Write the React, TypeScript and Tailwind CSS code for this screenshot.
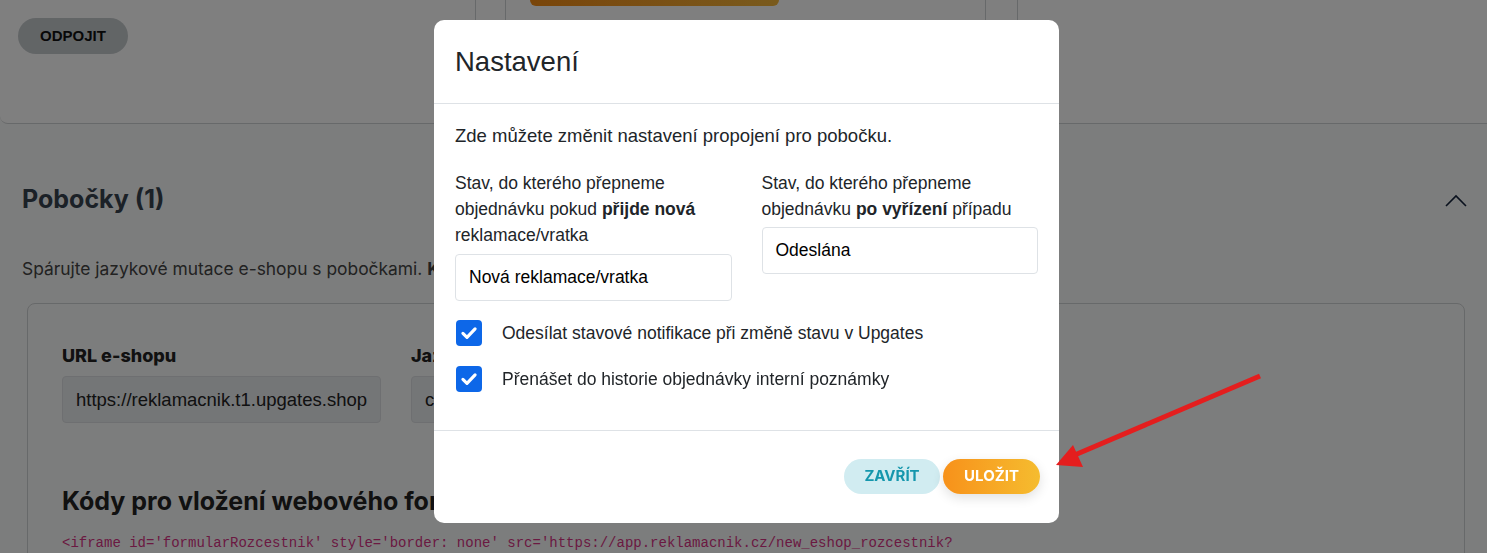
import React from 'react';

const Check = () => (
  <svg viewBox="0 0 16 16" className="w-[18px] h-[18px]" fill="none">
    <path d="M2.6 8.4l3.6 3.5L13.4 4.4" stroke="white" strokeWidth="2.8" strokeLinecap="round" strokeLinejoin="round" />
  </svg>
);

const Checkbox: React.FC<{ label: string }> = ({ label }) => (
  <label className="flex items-center gap-[20px]">
    <span className="w-[26px] h-[26px] rounded-[4px] bg-[#0d67e8] flex items-center justify-center ml-[1px]">
      <Check />
    </span>
    <span>{label}</span>
  </label>
);

const App: React.FC = () => {
  return (
    <div className="relative h-[553px] overflow-hidden bg-[#f9fbfa] font-['Inter',sans-serif] text-[#333]">
      {/* Page behind the modal */}
      <div className="flex h-[124px] bg-white border-b border-[#cfd2d4] rounded-bl-lg">
        <div className="w-[476px] border-r border-[#cfd2d4] pt-[18px] pl-[18px]">
          <button className="h-[36px] w-[110px] rounded-full bg-[#c5cacd] font-['Liberation_Sans',sans-serif] font-bold text-[15px] text-[#111]">
            ODPOJIT
          </button>
        </div>
        <div className="w-[29px]" />
        <div className="w-[481px] border-l border-r border-[#cfd2d4] pl-[24px]">
          <div className="w-[249px] h-[6px] rounded-b-[7px] bg-gradient-to-r from-[#f38a12] to-[#f3b53a]" />
        </div>
        <div className="w-[31px]" />
        <div className="flex-1 border-l border-[#cfd2d4]" />
      </div>

      <div className="pl-[22px] pr-[20px]">
        <div className="flex items-center justify-between mt-[60px] h-[32px]">
          <h2 className="text-[25px] font-bold text-[#36424f]">Pobočky (1)</h2>
          <svg viewBox="0 0 22 13" className="w-[22px] h-[13px]" fill="none">
            <path d="M1 12L11 2l10 10" stroke="#14233c" strokeWidth="1.6" />
          </svg>
        </div>
        <p className="mt-[41px] text-[17.4px] leading-[24px] text-[#444]">
          Spárujte jazykové mutace e-shopu s pobočkami. <b>Každá</b> pobočka má vlastní nastavení.
        </p>
      </div>

      <div className="ml-[27px] mr-[22px] mt-[22px] h-[300px] rounded-lg border border-[#cfd2d4] pl-[34px] pt-[41px]">
        <div className="flex gap-[30px]">
          <div className="w-[319px]">
            <div className="text-[18px] font-extrabold text-[#222] leading-[22px]">URL e-shopu</div>
            <div className="mt-[9px] h-[47px] rounded-[4px] bg-[#e9ecef] border border-[#dcdfe2] flex items-center px-[13px] font-['Liberation_Sans',sans-serif] text-[18.5px] text-[#222] whitespace-nowrap overflow-hidden">
              https://reklamacnik.t1.upgates.shop
            </div>
          </div>
          <div className="w-[320px]">
            <div className="text-[18px] font-extrabold text-[#222] leading-[22px]">Jazyk</div>
            <div className="mt-[9px] h-[47px] rounded-[4px] bg-[#e9ecef] border border-[#dcdfe2] flex items-center px-[13px] font-['Liberation_Sans',sans-serif] text-[18.5px] text-[#222]">
              cs
            </div>
          </div>
        </div>
        <h3 className="mt-[62px] text-[25px] font-bold text-[#222] leading-[32px]">Kódy pro vložení webového formuláře</h3>
        <div className="mt-[16px] font-['Liberation_Mono',monospace] text-[14px] text-[#d63384] whitespace-nowrap">
          &lt;iframe id='formularRozcestnik' style='border: none' src='https://app.reklamacnik.cz/new_eshop_rozcestnik?
        </div>
      </div>

      {/* Overlay + modal */}
      <div className="fixed inset-0 bg-black/50">
        <div className="ml-[434px] mt-[20px] w-[625px] rounded-[10px] bg-white font-['Liberation_Sans',sans-serif] text-[#212529] text-[17.5px]">
          <div className="h-[84px] border-b border-[#dee2e6] px-[21px] flex items-center">
            <h5 className="text-[27.5px] leading-none">Nastavení</h5>
          </div>
          <div className="px-[21px] pt-[19px] pb-[37px]">
            <p className="leading-[26px] text-[18.5px]">Zde můžete změnit nastavení propojení pro pobočku.</p>
            <div className="mt-[21px] grid grid-cols-2 gap-[30px]">
              <div>
                <div className="leading-[26px]">
                  Stav, do kterého přepneme objednávku pokud <b>přijde nová</b> reklamace/vratka
                </div>
                <div className="mt-[6px] h-[47px] border border-[#dee2e6] rounded-[4px] flex items-center px-[13px] text-black">
                  Nová reklamace/vratka
                </div>
              </div>
              <div>
                <div className="leading-[26px]">
                  Stav, do kterého přepneme objednávku <b>po vyřízení</b> případu
                </div>
                <div className="mt-[5px] h-[47px] border border-[#dee2e6] rounded-[4px] flex items-center px-[13px] text-black">
                  Odeslána
                </div>
              </div>
            </div>
            <div className="mt-[19px] flex flex-col gap-[20px]">
              <Checkbox label="Odesílat stavové notifikace při změně stavu v Upgates" />
              <Checkbox label="Přenášet do historie objednávky interní poznámky" />
            </div>
          </div>
          <div className="h-[93px] border-t border-[#dee2e6] flex items-center justify-end gap-[3px] pr-[19px]">
            <button className="h-[35px] w-[96px] rounded-full bg-[#d1ecf1] text-[#1597ad] font-['Inter',sans-serif] font-bold text-[15px]">
              ZAVŘÍT
            </button>
            <button className="h-[35px] w-[97px] rounded-full bg-gradient-to-r from-[#f7911a] to-[#f5bc2f] text-white font-['Inter',sans-serif] font-bold text-[15px] shadow-[0_4px_12px_rgba(0,0,0,0.12)]">
              ULOŽIT
            </button>
          </div>
        </div>
      </div>

      {/* Red annotation arrow */}
      <svg className="fixed inset-0 pointer-events-none" width="1487" height="553" viewBox="0 0 1487 553">
        <path d="M1260 376L1070 457" stroke="#e41e1e" strokeWidth="5" />
        <path d="M1056 465L1073 445L1083 467Z" fill="#e41e1e" />
      </svg>
    </div>
  );
};

export default App;
